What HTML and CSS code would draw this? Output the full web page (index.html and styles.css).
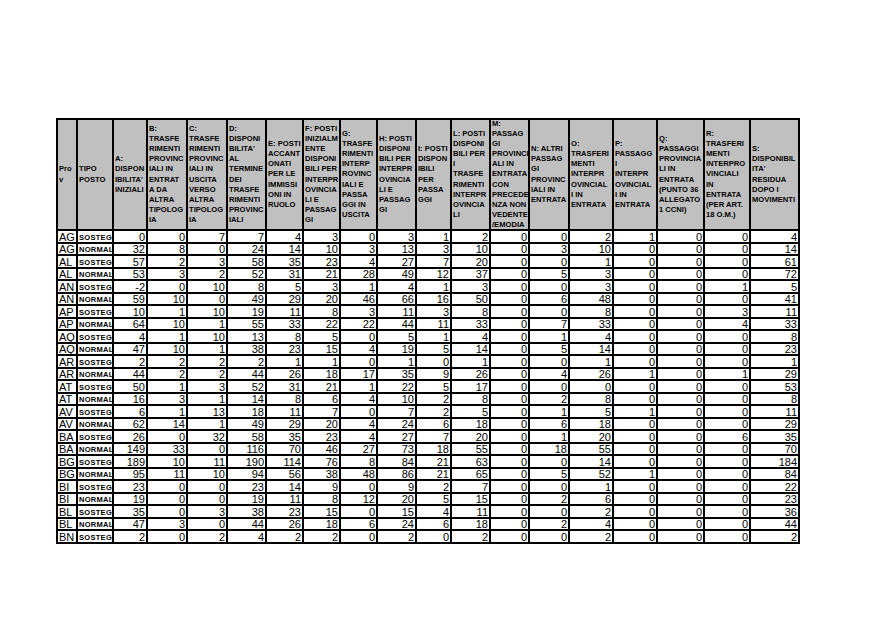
FILE: index.html
```html
<!DOCTYPE html>
<html lang="it">
<head>
<meta charset="utf-8">
<title>Disponibilità</title>
<link rel="stylesheet" href="styles.css">
</head>
<body>
<div class="page">
<table class="grid">
<colgroup>
<col style="width:20px"><col style="width:36px"><col style="width:34px"><col style="width:40px"><col style="width:40px"><col style="width:39px"><col style="width:37px"><col style="width:37px"><col style="width:37px"><col style="width:39px"><col style="width:35px"><col style="width:39px"><col style="width:39px"><col style="width:40px"><col style="width:44px"><col style="width:44px"><col style="width:47px"><col style="width:46px"><col style="width:49px">
</colgroup>
<thead>
<tr>
<th><div class="h">Pro<br>v</div></th>
<th><div class="h">TIPO<br>POSTO</div></th>
<th><div class="h">A:<br>DISPON<br>IBILITA'<br>INIZIALI</div></th>
<th><div class="h">B:<br>TRASFE<br>RIMENTI<br>PROVINC<br>IALI IN<br>ENTRAT<br>A DA<br>ALTRA<br>TIPOLOG<br>IA</div></th>
<th><div class="h">C:<br>TRASFE<br>RIMENTI<br>PROVINC<br>IALI IN<br>USCITA<br>VERSO<br>ALTRA<br>TIPOLOG<br>IA</div></th>
<th><div class="h">D:<br>DISPONI<br>BILITA'<br>AL<br>TERMINE<br>DEI<br>TRASFE<br>RIMENTI<br>PROVINC<br>IALI</div></th>
<th><div class="h">E: POSTI<br>ACCANT<br>ONATI<br>PER LE<br>IMMISSI<br>ONI IN<br>RUOLO</div></th>
<th><div class="h">F: POSTI<br>INIZIALM<br>ENTE<br>DISPONI<br>BILI PER<br>INTERPR<br>OVINCIA<br>LI E<br>PASSAG<br>GI</div></th>
<th><div class="h">G:<br>TRASFE<br>RIMENTI<br>INTERP<br>ROVINC<br>IALI E<br>PASSA<br>GGI IN<br>USCITA</div></th>
<th><div class="h">H: POSTI<br>DISPONI<br>BILI PER<br>INTERPR<br>OVINCIA<br>LI E<br>PASSAG<br>GI</div></th>
<th><div class="h">I: POSTI<br>DISPON<br>IBILI<br>PER<br>PASSA<br>GGI</div></th>
<th><div class="h">L: POSTI<br>DISPONI<br>BILI PER<br>I<br>TRASFE<br>RIMENTI<br>INTERPR<br>OVINCIA<br>LI</div></th>
<th><div class="h">M:<br>PASSAG<br>GI<br>PROVINCI<br>ALI IN<br>ENTRATA<br>CON<br>PRECEDE<br>NZA NON<br>VEDENTE<br>/EMODIA</div></th>
<th><div class="h">N: ALTRI<br>PASSAG<br>GI<br>PROVINC<br>IALI IN<br>ENTRATA</div></th>
<th><div class="h">O:<br>TRASFERI<br>MENTI<br>INTERPR<br>OVINCIAL<br>I IN<br>ENTRATA</div></th>
<th><div class="h">P:<br>PASSAGG<br>I<br>INTERPR<br>OVINCIAL<br>I IN<br>ENTRATA</div></th>
<th><div class="h">Q:<br>PASSAGGI<br>PROVINCIA<br>LI IN<br>ENTRATA<br>(PUNTO 36<br>ALLEGATO<br>1 CCNI)</div></th>
<th><div class="h">R:<br>TRASFERI<br>MENTI<br>INTERPRO<br>VINCIALI<br>IN<br>ENTRATA<br>(PER ART.<br>18 O.M.)</div></th>
<th><div class="h">S:<br>DISPONIBIL<br>ITA'<br>RESIDUA<br>DOPO I<br>MOVIMENTI</div></th>
</tr>
</thead>
<tbody>
<tr><td class="p">AG</td><td class="t">SOSTEG</td><td>0</td><td>0</td><td>7</td><td>7</td><td>4</td><td>3</td><td>0</td><td>3</td><td>1</td><td>2</td><td>0</td><td>0</td><td>2</td><td>1</td><td>0</td><td>0</td><td>4</td></tr>
<tr><td class="p">AG</td><td class="t">NORMAL</td><td>32</td><td>8</td><td>0</td><td>24</td><td>14</td><td>10</td><td>3</td><td>13</td><td>3</td><td>10</td><td>0</td><td>3</td><td>10</td><td>0</td><td>0</td><td>0</td><td>14</td></tr>
<tr><td class="p">AL</td><td class="t">SOSTEG</td><td>57</td><td>2</td><td>3</td><td>58</td><td>35</td><td>23</td><td>4</td><td>27</td><td>7</td><td>20</td><td>0</td><td>0</td><td>1</td><td>0</td><td>0</td><td>0</td><td>61</td></tr>
<tr><td class="p">AL</td><td class="t">NORMAL</td><td>53</td><td>3</td><td>2</td><td>52</td><td>31</td><td>21</td><td>28</td><td>49</td><td>12</td><td>37</td><td>0</td><td>5</td><td>3</td><td>0</td><td>0</td><td>0</td><td>72</td></tr>
<tr><td class="p">AN</td><td class="t">SOSTEG</td><td>-2</td><td>0</td><td>10</td><td>8</td><td>5</td><td>3</td><td>1</td><td>4</td><td>1</td><td>3</td><td>0</td><td>0</td><td>3</td><td>0</td><td>0</td><td>1</td><td>5</td></tr>
<tr><td class="p">AN</td><td class="t">NORMAL</td><td>59</td><td>10</td><td>0</td><td>49</td><td>29</td><td>20</td><td>46</td><td>66</td><td>16</td><td>50</td><td>0</td><td>6</td><td>48</td><td>0</td><td>0</td><td>0</td><td>41</td></tr>
<tr><td class="p">AP</td><td class="t">SOSTEG</td><td>10</td><td>1</td><td>10</td><td>19</td><td>11</td><td>8</td><td>3</td><td>11</td><td>3</td><td>8</td><td>0</td><td>0</td><td>8</td><td>0</td><td>0</td><td>3</td><td>11</td></tr>
<tr><td class="p">AP</td><td class="t">NORMAL</td><td>64</td><td>10</td><td>1</td><td>55</td><td>33</td><td>22</td><td>22</td><td>44</td><td>11</td><td>33</td><td>0</td><td>7</td><td>33</td><td>0</td><td>0</td><td>4</td><td>33</td></tr>
<tr><td class="p">AQ</td><td class="t">SOSTEG</td><td>4</td><td>1</td><td>10</td><td>13</td><td>8</td><td>5</td><td>0</td><td>5</td><td>1</td><td>4</td><td>0</td><td>1</td><td>4</td><td>0</td><td>0</td><td>0</td><td>8</td></tr>
<tr><td class="p">AQ</td><td class="t">NORMAL</td><td>47</td><td>10</td><td>1</td><td>38</td><td>23</td><td>15</td><td>4</td><td>19</td><td>5</td><td>14</td><td>0</td><td>5</td><td>14</td><td>0</td><td>0</td><td>0</td><td>23</td></tr>
<tr><td class="p">AR</td><td class="t">SOSTEG</td><td>2</td><td>2</td><td>2</td><td>2</td><td>1</td><td>1</td><td>0</td><td>1</td><td>0</td><td>1</td><td>0</td><td>0</td><td>1</td><td>0</td><td>0</td><td>0</td><td>1</td></tr>
<tr><td class="p">AR</td><td class="t">NORMAL</td><td>44</td><td>2</td><td>2</td><td>44</td><td>26</td><td>18</td><td>17</td><td>35</td><td>9</td><td>26</td><td>0</td><td>4</td><td>26</td><td>1</td><td>0</td><td>1</td><td>29</td></tr>
<tr><td class="p">AT</td><td class="t">SOSTEG</td><td>50</td><td>1</td><td>3</td><td>52</td><td>31</td><td>21</td><td>1</td><td>22</td><td>5</td><td>17</td><td>0</td><td>0</td><td>0</td><td>0</td><td>0</td><td>0</td><td>53</td></tr>
<tr><td class="p">AT</td><td class="t">NORMAL</td><td>16</td><td>3</td><td>1</td><td>14</td><td>8</td><td>6</td><td>4</td><td>10</td><td>2</td><td>8</td><td>0</td><td>2</td><td>8</td><td>0</td><td>0</td><td>0</td><td>8</td></tr>
<tr><td class="p">AV</td><td class="t">SOSTEG</td><td>6</td><td>1</td><td>13</td><td>18</td><td>11</td><td>7</td><td>0</td><td>7</td><td>2</td><td>5</td><td>0</td><td>1</td><td>5</td><td>1</td><td>0</td><td>0</td><td>11</td></tr>
<tr><td class="p">AV</td><td class="t">NORMAL</td><td>62</td><td>14</td><td>1</td><td>49</td><td>29</td><td>20</td><td>4</td><td>24</td><td>6</td><td>18</td><td>0</td><td>6</td><td>18</td><td>0</td><td>0</td><td>0</td><td>29</td></tr>
<tr><td class="p">BA</td><td class="t">SOSTEG</td><td>26</td><td>0</td><td>32</td><td>58</td><td>35</td><td>23</td><td>4</td><td>27</td><td>7</td><td>20</td><td>0</td><td>1</td><td>20</td><td>0</td><td>0</td><td>6</td><td>35</td></tr>
<tr><td class="p">BA</td><td class="t">NORMAL</td><td>149</td><td>33</td><td>0</td><td>116</td><td>70</td><td>46</td><td>27</td><td>73</td><td>18</td><td>55</td><td>0</td><td>18</td><td>55</td><td>0</td><td>0</td><td>0</td><td>70</td></tr>
<tr><td class="p">BG</td><td class="t">SOSTEG</td><td>189</td><td>10</td><td>11</td><td>190</td><td>114</td><td>76</td><td>8</td><td>84</td><td>21</td><td>63</td><td>0</td><td>0</td><td>14</td><td>0</td><td>0</td><td>0</td><td>184</td></tr>
<tr><td class="p">BG</td><td class="t">NORMAL</td><td>95</td><td>11</td><td>10</td><td>94</td><td>56</td><td>38</td><td>48</td><td>86</td><td>21</td><td>65</td><td>0</td><td>5</td><td>52</td><td>1</td><td>0</td><td>0</td><td>84</td></tr>
<tr><td class="p">BI</td><td class="t">SOSTEG</td><td>23</td><td>0</td><td>0</td><td>23</td><td>14</td><td>9</td><td>0</td><td>9</td><td>2</td><td>7</td><td>0</td><td>0</td><td>1</td><td>0</td><td>0</td><td>0</td><td>22</td></tr>
<tr><td class="p">BI</td><td class="t">NORMAL</td><td>19</td><td>0</td><td>0</td><td>19</td><td>11</td><td>8</td><td>12</td><td>20</td><td>5</td><td>15</td><td>0</td><td>2</td><td>6</td><td>0</td><td>0</td><td>0</td><td>23</td></tr>
<tr><td class="p">BL</td><td class="t">SOSTEG</td><td>35</td><td>0</td><td>3</td><td>38</td><td>23</td><td>15</td><td>0</td><td>15</td><td>4</td><td>11</td><td>0</td><td>0</td><td>2</td><td>0</td><td>0</td><td>0</td><td>36</td></tr>
<tr><td class="p">BL</td><td class="t">NORMAL</td><td>47</td><td>3</td><td>0</td><td>44</td><td>26</td><td>18</td><td>6</td><td>24</td><td>6</td><td>18</td><td>0</td><td>2</td><td>4</td><td>0</td><td>0</td><td>0</td><td>44</td></tr>
<tr><td class="p">BN</td><td class="t">SOSTEG</td><td>2</td><td>0</td><td>2</td><td>4</td><td>2</td><td>2</td><td>0</td><td>2</td><td>0</td><td>2</td><td>0</td><td>0</td><td>2</td><td>0</td><td>0</td><td>0</td><td>2</td></tr>
</tbody>
</table>
</div>
</body>
</html>
```
FILE: styles.css
```css
html, body {
  margin: 0;
  padding: 0;
  background: #ffffff;
}
.page {
  padding: 118px 0 0 56px;
}
.grid {
  border-collapse: collapse;
  table-layout: fixed;
  width: 744px;
  font-family: "Liberation Sans", Arial, sans-serif;
  color: #000;
}
.grid th {
  background: #c0c0c0;
  border: 2px solid #000;
  padding: 0;
  height: 109px;
  text-align: left;
  vertical-align: middle;
  font-weight: bold;
  font-size: 7.6px;
  line-height: 10.1px;
}
.grid th .h {
  height: 109px;
  display: flex;
  align-items: center;
  overflow: hidden;
  white-space: nowrap;
  padding-left: 1px;
}
.grid td {
  border: 2px solid #000;
  padding: 0 1px 0 0;
  height: 10.5px;
  font-size: 11px;
  line-height: 10px;
  text-align: right;
  vertical-align: bottom;
  white-space: nowrap;
  overflow: hidden;
}
.grid td.p {
  text-align: left;
  padding: 0 0 0 1px;
}
.grid td.t {
  text-align: left;
  font-size: 7.5px;
  font-weight: bold;
  letter-spacing: 0.3px;
  padding: 0 0 0 1px;
  line-height: 9px;
}
```
